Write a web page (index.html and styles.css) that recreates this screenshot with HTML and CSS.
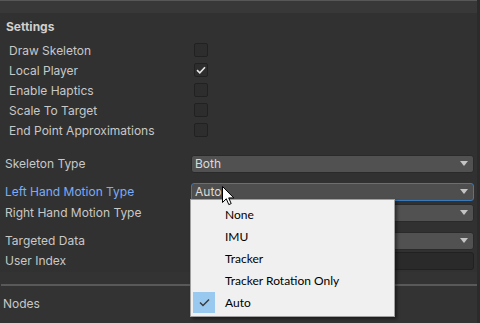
FILE: index.html
```html
<!DOCTYPE html>
<html lang="en">
<head>
    <meta charset="UTF-8">
    <title>Inspector | Settings</title>
    <link rel="stylesheet" href="styles.css">
</head>
<body>

    <div class="inspector">
        <div class="topbar"></div>

        <div class="settings">
            <div class="section-title">Settings</div>

            <div class="row toggle">
                <span class="label">Draw Skeleton</span>
                <span class="checkbox"></span>
            </div>
            <div class="row toggle">
                <span class="label">Local Player</span>
                <span class="checkbox checked">
                    <svg width="10" height="8" viewBox="0 0 10 8"><path d="M1 4.2 L3.8 6.8 L9 1.2" fill="none" stroke="#e6e6e6" stroke-width="1.6"/></svg>
                </span>
            </div>
            <div class="row toggle">
                <span class="label">Enable Haptics</span>
                <span class="checkbox"></span>
            </div>
            <div class="row toggle">
                <span class="label">Scale To Target</span>
                <span class="checkbox"></span>
            </div>
            <div class="row toggle">
                <span class="label">End Point Approximations</span>
                <span class="checkbox"></span>
            </div>

            <div class="row field first">
                <span class="label">Skeleton Type</span>
                <div class="dropdown"><span>Both</span><i class="arrow"></i></div>
            </div>
            <div class="row field spaced">
                <span class="label focused">Left Hand Motion Type</span>
                <div class="dropdown active"><span>Auto</span><i class="arrow"></i></div>
            </div>
            <div class="row field">
                <span class="label">Right Hand Motion Type</span>
                <div class="dropdown"><span>Auto</span><i class="arrow"></i></div>
            </div>
            <div class="row field spaced">
                <span class="label">Targeted Data</span>
                <div class="dropdown"><span>All</span><i class="arrow"></i></div>
            </div>
            <div class="row field tight">
                <span class="label">User Index</span>
                <div class="textfield"></div>
            </div>
        </div>

        <div class="separator"></div>

        <div class="section-plain">Nodes</div>
    </div>

    <div class="popup">
        <div class="item"><span class="tick"></span>None</div>
        <div class="item"><span class="tick"></span>IMU</div>
        <div class="item"><span class="tick"></span>Tracker</div>
        <div class="item"><span class="tick"></span>Tracker Rotation Only</div>
        <div class="item selected">
            <span class="tick">
                <svg width="11" height="9" viewBox="0 0 11 9"><path d="M1 4.5 L4 7.5 L10 1.5" fill="none" stroke="#3c3c3c" stroke-width="1.5"/></svg>
            </span>Auto
        </div>
    </div>

    <svg class="cursor" width="13" height="20" viewBox="0 0 13 20">
        <path d="M0.5 0.5 L0.5 16.5 L4.3 12.8 L6.8 18.6 L9.2 17.6 L6.7 11.9 L11.8 11.9 Z" fill="#ffffff" stroke="#000000" stroke-width="1" stroke-linejoin="round"/>
    </svg>

</body>
</html>
```

FILE: styles.css
```css
body {
    margin: 0;
    padding: 0;
    width: 480px;
    height: 323px;
    overflow: hidden;
    background: #333333;
    font-family: Inter, "Noto Sans", sans-serif;
    font-size: 12px;
    color: #c8c8c8;
}
.inspector {
    display: flex;
    flex-direction: column;
    border-right: 3px solid #2b2b2b;
    width: 477px;
    height: 323px;
}
.topbar {
    height: 12px;
    border-top: 1px solid #575757;
    background: #383838;
}
.settings {
    background: #313131;
    padding-bottom: 2px;
}
.section-title {
    height: 27px;
    line-height: 27px;
    padding-left: 6px;
    font-weight: bold;
    color: #cfcfcf;
}
.row {
    display: grid;
    grid-template-columns: 191px 1fr;
    align-items: center;
    height: 20px;
    padding-right: 3px;
}
.row.toggle .label {
    padding-left: 9px;
}
.row.field .label {
    padding-left: 5px;
}
.row.field {
    height: 21px;
}
.row.first {
    margin-top: 13px;
}
.row.spaced {
    margin-top: 7px;
}
.row.tight {
    height: 19px;
}
.label {
    white-space: nowrap;
}
.label.focused {
    color: #7cacf6;
}
.checkbox {
    width: 12px;
    height: 12px;
    margin-left: 3px;
    background: #2d2d2d;
    border: 1px solid #212121;
    border-radius: 2px;
    display: flex;
    align-items: center;
    justify-content: center;
}
.dropdown {
    height: 16px;
    background: #515151;
    border: 1px solid #2a2a2a;
    border-radius: 3px;
    display: flex;
    align-items: center;
    justify-content: space-between;
    padding: 0 5px 0 3px;
    color: #dadada;
}
.dropdown.active {
    border-color: #3a79bb;
    background: #4e4e4e;
}
.arrow {
    width: 0;
    height: 0;
    border-left: 4px solid transparent;
    border-right: 4px solid transparent;
    border-top: 5px solid #c4c4c4;
}
.textfield {
    height: 16px;
    background: #2a2a2a;
    border: 1px solid #212121;
    border-radius: 3px;
}
.separator {
    height: 2px;
    background: #595959;
    margin: 12px 0 0 1px;
}
.section-plain {
    padding-left: 3px;
    height: 36px;
    line-height: 36px;
}
.popup {
    position: absolute;
    left: 190px;
    top: 199px;
    width: 201px;
    padding: 3px 0 3px 2px;
    background: #f0f0f0;
    border: 1px solid #a0a0a0;
    box-shadow: 2px 2px 3px rgba(0, 0, 0, 0.45);
    font-family: Lato, "Noto Sans", sans-serif;
    font-size: 12px;
    color: #000000;
}
.item {
    display: flex;
    align-items: center;
    height: 22px;
}
.tick {
    width: 22px;
    height: 21px;
    margin-right: 10px;
    display: flex;
    align-items: center;
    justify-content: center;
}
.item.selected .tick {
    background: #99c9ef;
}
.cursor {
    position: absolute;
    left: 222px;
    top: 186px;
}
```
